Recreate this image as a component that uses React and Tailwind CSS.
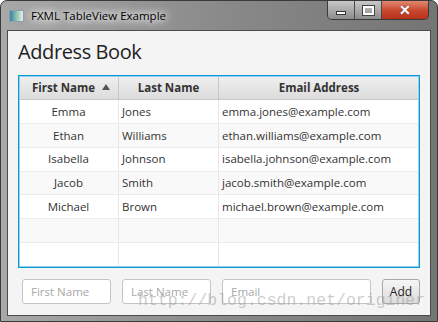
import React from "react";

const people = [
  { first: "Emma", last: "Jones", email: "emma.jones@example.com" },
  { first: "Ethan", last: "Williams", email: "ethan.williams@example.com" },
  { first: "Isabella", last: "Johnson", email: "isabella.johnson@example.com" },
  { first: "Jacob", last: "Smith", email: "jacob.smith@example.com" },
  { first: "Michael", last: "Brown", email: "michael.brown@example.com" },
  null,
  null,
];

function TitleBar() {
  return (
    <div className="relative h-[29px] flex items-start">
      <div className="flex items-center gap-[7px] pl-[8px] pt-[8px]">
        <div className="w-[15px] h-[12px] border border-[#8aa0b0] bg-gradient-to-r from-[#3d7fae] via-[#8fc4a8] to-[#e8eef2]" />
        <span className="text-[11.5px] leading-[14px] text-black [text-shadow:0_0_6px_#fff,0_0_10px_#fff,0_0_14px_#fff]">
          FXML TableView Example
        </span>
      </div>
      <div className="absolute right-[8px] top-0 flex h-[19px] border border-t-0 border-[#3a3a3a] rounded-b-[5px] overflow-hidden">
        <div className="w-[27px] flex items-end justify-center pb-[4px] bg-gradient-to-b from-[#c9c9c9] to-[#8c8c8c] border-r border-[#4a4a4a]">
          <div className="w-[10px] h-[4px] bg-white border border-[#333]" />
        </div>
        <div className="w-[27px] flex items-center justify-center bg-gradient-to-b from-[#c9c9c9] to-[#8c8c8c] border-r border-[#4a4a4a]">
          <div className="w-[11px] h-[9px] border-2 border-white outline outline-1 outline-[#444]" />
        </div>
        <div className="w-[46px] flex items-center justify-center bg-gradient-to-b from-[#e08870] via-[#c94a30] to-[#b8301a]">
          <span className="text-white font-bold text-[14px] leading-none [text-shadow:0_0_1px_#333] font-['Liberation_Sans',sans-serif]">
            ✕
          </span>
        </div>
      </div>
    </div>
  );
}

function Row({ p, i }) {
  const bg = i % 2 === 1 ? "bg-[#f9f9f9]" : "bg-white";
  return (
    <div className={`flex h-[24px] border-b border-[#ececec] ${bg} text-[11.5px] text-[#333]`}>
      <div className="w-[100px] border-r border-[#e6e6e6] flex items-center justify-center">{p?.first}</div>
      <div className="w-[100px] border-r border-[#e6e6e6] flex items-center pl-[3px]">{p?.last}</div>
      <div className="flex-1 flex items-center pl-[3px]">{p?.email}</div>
    </div>
  );
}

export default function App() {
  return (
    <div className="w-[438px] h-[322px] bg-white font-['Open_Sans',sans-serif]">
      <div className="relative w-[438px] h-[322px] rounded-t-[7px] border border-[#3a3a3a] bg-gradient-to-r from-[#a8a8a8] via-[#8a8a8a] to-[#747474] flex flex-col">
        <TitleBar />
        <div className="mx-[6px] h-[286px] border border-[#4c4c4c] bg-[#f4f4f4] px-[10px] pt-[7px]">
          <h1 className="text-[20px] leading-[28px] text-[#222] tracking-[-0.4px]">Address Book</h1>
          <div className="mt-[9px] h-[193px] border border-[#0a9ad6] outline outline-1 outline-[#8fd0ee] outline-offset-[-2px] bg-white flex flex-col">
            <div className="flex h-[24px] bg-gradient-to-b from-[#f0f0f0] to-[#dcdcdc] border-b border-[#c8c8c8] text-[11.5px] font-bold text-[#333]">
              <div className="w-[100px] border-r border-[#c8c8c8] flex items-center justify-center relative">
                <span className="pr-[10px]">First Name</span>
                <span className="absolute right-[8px] top-[8px] w-0 h-0 border-l-[4px] border-r-[4px] border-b-[6px] border-l-transparent border-r-transparent border-b-[#555]" />
              </div>
              <div className="w-[100px] border-r border-[#c8c8c8] flex items-center justify-center">Last Name</div>
              <div className="flex-1 flex items-center justify-center">Email Address</div>
            </div>
            {people.map((p, i) => (
              <Row key={i} p={p} i={i} />
            ))}
          </div>
          <div className="mt-[11px] pl-[4px] flex gap-[11px] text-[11.5px]">
            <input placeholder="First Name" className="w-[89px] h-[25px] rounded-[3px] border border-[#c4c4c4] bg-white pl-[8px] placeholder:text-[#a8a8a8] outline-none" />
            <input placeholder="Last Name" className="w-[89px] h-[25px] rounded-[3px] border border-[#c4c4c4] bg-white pl-[8px] placeholder:text-[#a8a8a8] outline-none" />
            <input placeholder="Email" className="w-[149px] h-[25px] rounded-[3px] border border-[#c4c4c4] bg-white pl-[8px] placeholder:text-[#a8a8a8] outline-none" />
            <button className="w-[38px] h-[25px] rounded-[3px] border border-[#a8a8a8] bg-gradient-to-b from-[#f6f6f6] to-[#dcdcdc] text-[12px] text-[#222]">
              Add
            </button>
          </div>
        </div>
        <span className="absolute left-[137px] top-[292px] text-[16.5px] leading-none text-[#9a9a9a]/50 font-['Liberation_Mono',monospace] pointer-events-none">
          http://blog.csdn.net/originer
        </span>
      </div>
    </div>
  );
}
